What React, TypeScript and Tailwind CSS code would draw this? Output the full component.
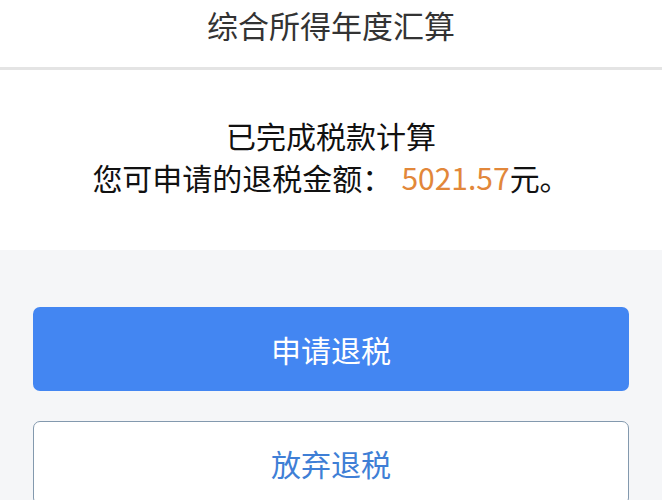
export default function App() {
  return (
    <div
      className="w-[662px] h-[500px] overflow-hidden bg-[#f5f6f8] flex flex-col"
      style={{ fontFamily: '"Noto Sans CJK SC", "Noto Sans", sans-serif' }}
    >
      {/* 标题栏 */}
      <div className="h-[70px] shrink-0 bg-white flex justify-center pt-[5px] border-b-[3px] border-[#e4e4e4]">
        <h1 className="text-[31px] leading-[40px] text-[#333333] font-normal">综合所得年度汇算</h1>
      </div>

      {/* 结果 */}
      <div className="shrink-0 h-[180px] bg-white pt-[44px] flex flex-col items-center text-[30px] leading-[42px] text-[#111111]">
        <p>已完成税款计算</p>
        <p>
          您可申请的退税金额：
          <span className="ml-[9px] text-[#e2873a]">5021.57</span>元。
        </p>
      </div>

      {/* 按钮 */}
      <div className="shrink-0 px-[33px] pt-[57px] flex flex-col gap-[30px]">
        <button className="h-[84px] w-full rounded-[7px] bg-[#4386f2] text-white text-[30px]">
          申请退税
        </button>
        <button className="h-[84px] w-full rounded-[7px] bg-white border-[1.5px] border-[#8399ae] text-[#3f7fd6] text-[30px]">
          放弃退税
        </button>
      </div>
    </div>
  );
}
